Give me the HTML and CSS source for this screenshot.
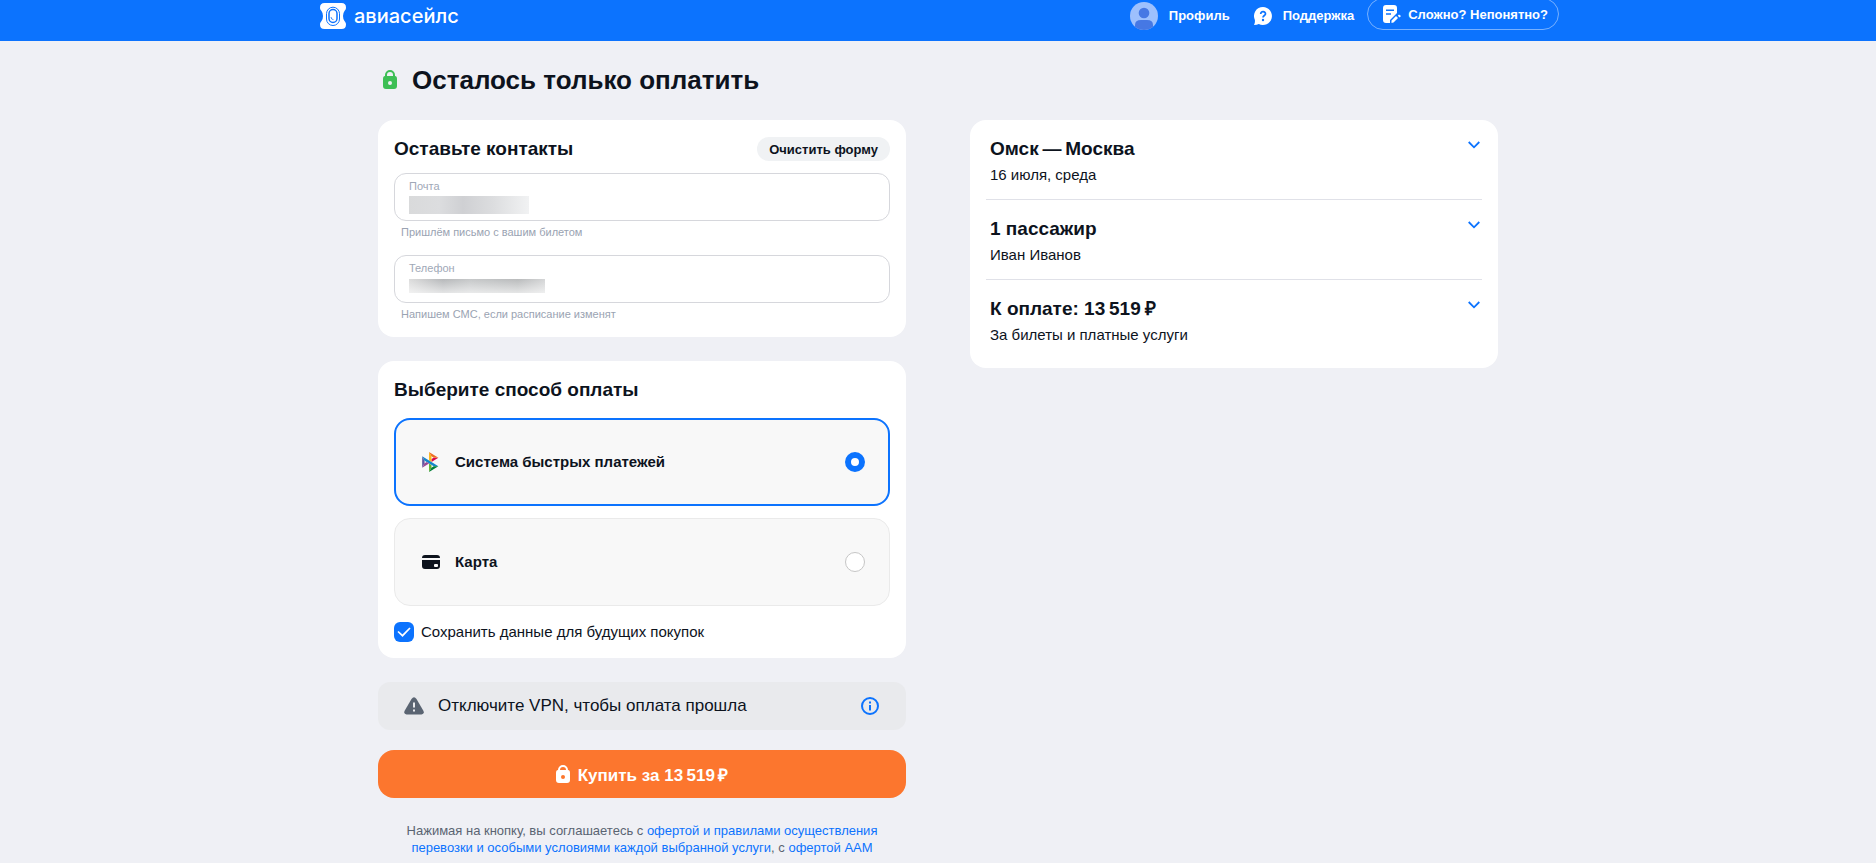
FILE: index.html
```
<!DOCTYPE html>
<html lang="ru">

<head>
    <meta charset="utf-8">
    <meta name="viewport" content="width=device-width, initial-scale=1">
    <title>Оплата</title>
    <link rel="stylesheet" href="styles.css">
</head>

<body>
    <header class="header">
        <div class="header-inner">
            <a class="logo" href="#">
                <svg width="26" height="26" viewBox="0 0 26 26">
                    <path fill="#fff" d="M4.500 0h17Q26 0 26 4.500c0 2-.8 2.500-1.500 3.500Q23 10 23 13t1.500 5c.7 1 1.500 1.500 1.500 3.500q0 4.500-4.500 4.500h-17Q0 26 0 21.500c0-2 .8-2.500 1.500-3.500Q3 16 3 13T1.500 8C.8 7 0 6.500 0 4.500Q0 0 4.500 0z" />
                    <rect x="6.500" y="4.200" width="13" height="18.300" rx="6.500" fill="none" stroke="#0c73fe" />
                    <rect x="9" y="6.500" width="8" height="13" rx="4" fill="none" stroke="#0c73fe" stroke-width="1.500" />
                    <path d="M11 14q0 2.500 2.500 2.700" fill="none" stroke="#0c73fe" stroke-width=".8" />
                </svg>
                <span>авиасейлс</span>
            </a>
            <nav class="nav">
                <a class="nav-link" href="#">
                    <svg width="28" height="28" viewBox="0 0 28 28">
                        <circle cx="14" cy="14" r="14" fill="#9dc0fd" />
                        <circle cx="14" cy="11" r="5.300" fill="#4678e4" />
                        <path fill="#4678e4" d="M5 24.700V23q0-5 6-5h6q6 0 6 5v1.700Q19 28 14 28t-9-3.300z" />
                    </svg>
                    Профиль
                </a>
                <a class="nav-link" href="#">
                    <svg width="18" height="18" viewBox="0 0 18 18">
                        <path fill="#fff" d="M9 0a9 9 0 1 1-4.200 17Q3 18 0 18q1.200-2 .9-5A9 9 0 0 1 9 0z" />
                        <path d="M6.700 7q0-2.300 2.400-2.300T11.500 7C11.500 8.500 9 8.600 9 10.500" fill="none" stroke="#0c73fe" stroke-width="1.700" />
                        <circle cx="9" cy="13" r="1.200" fill="#0c73fe" />
                    </svg>
                    Поддержка
                </a>
                <button class="help-button" type="button">
                    <svg width="18" height="18" viewBox="0 0 18 18">
                        <path fill="#fff" d="M3 0h8q3 0 3 3v5l-7 7v3H3q-3 0-3-3V3q0-3 3-3z" />
                        <path d="M3 5.200h8M3 9h5" stroke="#0c73fe" stroke-width="1.600" />
                        <path fill="#fff" d="M8.500 15.500l4.500-4.500 2 2-4.500 4.500-2 .5zM14.800 10.700l1.200-1.200 2 1.600-1.500 1.300z" />
                    </svg>
                    Сложно? Непонятно?
                </button>
            </nav>
        </div>
    </header>

    <main class="page">
        <div class="page-title">
            <svg width="24" height="24" viewBox="0 0 24 24">
                <path fill="#3dbf55" d="M5 11q0-3 2-3V7a5 5 0 0 1 10 0v1q2 0 2 3v7q0 3-3 3H8q-3 0-3-3z" />
                <path fill="#eff0f5" d="M9 8V7a3 3 0 0 1 6 0v1z" />
                <circle cx="12" cy="15" r="2" fill="#eff0f5" />
            </svg>
            <h1>Осталось только оплатить</h1>
        </div>

        <div class="columns">
            <form class="column">
                <section class="card">
                    <div class="card-head">
                        <h2>Оставьте контакты</h2>
                        <button class="clear-button" type="reset">Очистить форму</button>
                    </div>
                    <div class="field">
                        <div class="field-box">
                            <label for="email">Почта</label>
                            <input class="masked masked-email" id="email" type="email">
                        </div>
                        <p class="hint">Пришлём письмо с вашим билетом</p>
                    </div>
                    <div class="field">
                        <div class="field-box">
                            <label for="phone">Телефон</label>
                            <input class="masked masked-phone" id="phone" type="tel">
                        </div>
                        <p class="hint">Напишем СМС, если расписание изменят</p>
                    </div>
                </section>

                <section class="card">
                    <h2>Выберите способ оплаты</h2>
                    <div class="methods">
                        <label class="method">
                            <svg width="20" height="20" viewBox="-7 0 120 120">
                                <path fill="#5b57a2" d="M0 26.120l14.532 25.975v15.844L.017 93.863 0 26.120z" />
                                <path fill="#d90751" d="M55.797 42.643l13.617-8.346 27.868-.026-41.485 25.414V42.643z" />
                                <path fill="#fab718" d="M55.720 25.967l.077 34.390-14.566-8.950V0l14.490 25.967z" />
                                <path fill="#ed6f26" d="M97.282 34.271l-27.869.026-13.693-8.330L41.231 0l56.050 34.271z" />
                                <path fill="#63b22f" d="M55.797 94.007V77.322l-14.566-8.780.008 51.458 14.558-25.993z" />
                                <path fill="#1487c9" d="M69.380 85.737L14.531 52.095 0 26.120l97.223 59.583-27.844.034z" />
                                <path fill="#017f36" d="M41.240 120l14.556-25.993 13.583-8.270 27.843-.034L41.239 120z" />
                                <path fill="#984995" d="M.017 93.863l41.333-25.320-13.896-8.526-12.922 7.922L.017 93.863z" />
                            </svg>
                            <span>Система быстрых платежей</span>
                            <input type="radio" name="method" checked>
                        </label>
                        <label class="method">
                            <svg width="20" height="20" viewBox="0 0 20 20">
                                <path fill="#0d131d" d="M1 6q0-3 3-3h12q3 0 3 3zM1 8h18v6q0 3-3 3H4q-3 0-3-3z" />
                                <rect x="13" y="12" width="4" height="3" rx="1" fill="#f8f8f8" />
                            </svg>
                            <span>Карта</span>
                            <input type="radio" name="method">
                        </label>
                    </div>
                    <label class="save">
                        <input type="checkbox" checked>
                        <svg width="20" height="20" viewBox="0 0 20 20">
                            <path d="M4 9.500l4.500 4.200L16 6" fill="none" stroke="#fff" stroke-width="1.700" />
                        </svg>
                        <span>Сохранить данные для будущих покупок</span>
                    </label>
                </section>

                <div class="notice">
                    <svg width="20" height="18" viewBox="0 0 20 18">
                        <path fill="#5a6472" d="M7.500 2q2.500-3.500 5 0l7 12q1 3-2 3.500H2.500q-3-.5-2-3.500z" />
                        <path d="M10 5.500v5M10 12.500v2" stroke="#e9eaed" stroke-width="2" />
                    </svg>
                    <span>Отключите VPN, чтобы оплата прошла</span>
                    <button class="info-button" type="button" aria-label="Подробнее">
                        <svg width="18" height="18" viewBox="0 0 18 18">
                            <circle cx="9" cy="9" r="8" fill="none" stroke="#0c73fe" stroke-width="2" />
                            <path d="M9 4.500v2M9 8v5.500" stroke="#0c73fe" stroke-width="2" />
                        </svg>
                    </button>
                </div>

                <button class="buy-button" type="submit">
                    <svg width="14" height="18" viewBox="0 0 14 18">
                        <path fill="#fff" d="M0 8q0-3 2-3a5 5 0 0 1 10 0q2 0 2 3v7q0 3-3 3H3q-3 0-3-3z" />
                        <path fill="#fc762e" d="M4 5a3 3 0 0 1 6 0z" />
                        <circle cx="7" cy="12" r="2" fill="#fc762e" />
                    </svg>
                    Купить за 13&#8201;519&#8201;₽
                </button>

                <p class="terms">
                    Нажимая на кнопку, вы соглашаетесь с <a href="#">офертой и правилами осуществления перевозки и особыми условиями каждой выбранной услуги</a>, с <a href="#">офертой ААМ</a>
                </p>
            </form>

            <aside class="column">
                <div class="card summary">
                    <details class="summary-item">
                        <summary>
                            <h2>Омск&#8201;—&#8201;Москва</h2>
                            <p>16 июля, среда</p>
                            <svg class="chevron" width="12" height="8" viewBox="0 0 12 8">
                                <path d="M.7 1L6 6.300 11.300 1" fill="none" stroke="#0c73fe" stroke-width="1.800" />
                            </svg>
                        </summary>
                    </details>
                    <details class="summary-item">
                        <summary>
                            <h2>1 пассажир</h2>
                            <p>Иван Иванов</p>
                            <svg class="chevron" width="12" height="8" viewBox="0 0 12 8">
                                <path d="M.7 1L6 6.300 11.300 1" fill="none" stroke="#0c73fe" stroke-width="1.800" />
                            </svg>
                        </summary>
                    </details>
                    <details class="summary-item">
                        <summary>
                            <h2>К оплате: 13&#8201;519&#8201;₽</h2>
                            <p>За билеты и платные услуги</p>
                            <svg class="chevron" width="12" height="8" viewBox="0 0 12 8">
                                <path d="M.7 1L6 6.300 11.300 1" fill="none" stroke="#0c73fe" stroke-width="1.800" />
                            </svg>
                        </summary>
                    </details>
                </div>
            </aside>
        </div>
    </main>
</body>

</html>
```
FILE: styles.css
```
* {
    box-sizing: border-box;
}

body {
    margin: 0;
    background-color: #eff0f5;
    color: #0d131d;
    font-family: "Liberation Sans", Arial, sans-serif;
    font-size: 15px;
    line-height: 20px;
}

h1, h2, p {
    margin: 0;
}

h1 {
    font-size: 26px;
    line-height: 32px;
}

h2 {
    font-size: 19px;
    line-height: 26px;
}

a {
    color: #0c73fe;
    text-decoration: none;
}

button, input {
    font-family: inherit;
    color: inherit;
}

button {
    border: none;
    cursor: pointer;
}

svg {
    display: block;
    flex-shrink: 0;
}

/* header */
.header {
    background-color: #0c73fe;
    overflow: hidden;
}

.header-inner {
    display: flex;
    justify-content: space-between;
    align-items: flex-start;
    max-width: 1242px;
    height: 41px;
    margin: 0 auto;
}

.logo {
    display: flex;
    align-items: center;
    gap: 8px;
    height: 32px;
    padding-left: 3px;
    color: #fff;
    font-family: Inter, sans-serif;
    font-size: 20px;
    font-weight: 500;
}

.nav {
    display: flex;
    align-items: flex-start;
}

.nav-link {
    display: flex;
    align-items: center;
    gap: 11px;
    height: 32px;
    margin-right: 24px;
    color: #fff;
    font-size: 13px;
    font-weight: bold;
}

.nav-link + .nav-link {
    margin-right: 13px;
}

.help-button {
    display: flex;
    align-items: center;
    gap: 7px;
    height: 32px;
    margin-top: -2px;
    padding: 0 10px 0 15px;
    border: 1px solid #78b1ff;
    border-radius: 16px;
    background: none;
    color: #fff;
    font-size: 13px;
    font-weight: bold;
}

/* layout */
.page {
    max-width: 1120px;
    margin: 0 auto;
    padding-top: 23px;
}

.page-title {
    display: flex;
    align-items: center;
    gap: 10px;
}

.columns {
    display: grid;
    grid-template-columns: 1fr 1fr;
    align-items: start;
    gap: 64px;
    margin-top: 24px;
}

.card {
    margin-bottom: 24px;
    padding: 16px;
    border-radius: 16px;
    background-color: #fff;
}

/* contacts */
.card-head {
    display: flex;
    justify-content: space-between;
    align-items: center;
    margin-bottom: 11px;
}

.clear-button {
    height: 24px;
    padding: 0 12px;
    border-radius: 12px;
    background-color: #f0f2f4;
    font-size: 13px;
    font-weight: bold;
}

.field + .field {
    margin-top: 16px;
}

.field-box {
    height: 48px;
    padding: 6px 14px;
    border: 1px solid #d6d7dc;
    border-radius: 12px;
}

.field-box label {
    display: block;
    color: #a0a8b7;
    font-size: 11px;
    line-height: 12px;
}

.hint {
    padding: 4px 7px 0;
    color: #9aa3b2;
    font-size: 11px;
    line-height: 14px;
}

/* hidden personal data */
.masked {
    display: block;
    height: 18px;
    margin-top: 4px;
    padding: 0;
    border: none;
}

.masked-email {
    width: 120px;
    background: linear-gradient(90deg, #d9dadb, #dcdddf 25%, #cfd0d3 45%, #dcdddf 70%, #f1f2f3);
}

.masked-phone {
    width: 136px;
    height: 14px;
    margin-top: 5px;
    background: linear-gradient(transparent, #ffffffa0), linear-gradient(90deg, #dcdcdc, #b6b8ba 25%, #c6c8c9 45%, #b9bbbc 80%, #d4d5d6);
}

/* payment methods */
.methods {
    display: grid;
    gap: 12px;
    margin: 15px 0 16px;
}

.method {
    display: flex;
    align-items: center;
    gap: 14px;
    height: 88px;
    padding: 0 24px 0 26px;
    border: 1px solid #eaeaea;
    border-radius: 16px;
    background-color: #f8f8f8;
    font-weight: bold;
}

.method:has(input:checked) {
    padding: 0 23px 0 25px;
    border: 2px solid #0c73fe;
}

.method input {
    appearance: none;
    width: 20px;
    height: 20px;
    margin: 0 0 0 auto;
    border: 1px solid #c6c6c6;
    border-radius: 50%;
    background-color: #fff;
}

.method input:checked {
    border: 6px solid #0c73fe;
}

.save {
    display: grid;
    grid-template-columns: 20px 1fr;
    align-items: center;
    column-gap: 7px;
}

.save input,
.save svg {
    grid-area: 1 / 1;
}

.save input {
    appearance: none;
    width: 20px;
    height: 20px;
    margin: 0;
    border: 1px solid #c6c6c6;
    border-radius: 6px;
}

.save input:checked {
    border: none;
    background-color: #0c73fe;
}

/* notice and submit */
.notice {
    display: flex;
    align-items: center;
    gap: 14px;
    height: 48px;
    margin-bottom: 20px;
    padding: 0 27px 0 26px;
    border-radius: 12px;
    background-color: #e9eaed;
    font-size: 17px;
}

.info-button {
    margin-left: auto;
    padding: 0;
    background: none;
}

.buy-button {
    display: flex;
    justify-content: center;
    align-items: center;
    gap: 8px;
    width: 100%;
    height: 48px;
    border-radius: 16px;
    background-color: #fc762e;
    color: #fff;
    font-size: 17px;
    font-weight: bold;
}

.terms {
    padding: 24px 24px 0;
    color: #5a6472;
    font-size: 13px;
    line-height: 17px;
    text-align: center;
}

/* order summary */
.summary {
    padding-bottom: 9px;
}

.summary-item summary {
    position: relative;
    display: block;
    height: 63px;
    padding: 0 4px;
    cursor: pointer;
}

.summary-item summary p {
    margin-top: 3px;
}

.summary-item + .summary-item {
    padding-top: 16px;
    border-top: 1px solid #e0e1e8;
}

.chevron {
    position: absolute;
    top: 5px;
    right: 2px;
}
```
